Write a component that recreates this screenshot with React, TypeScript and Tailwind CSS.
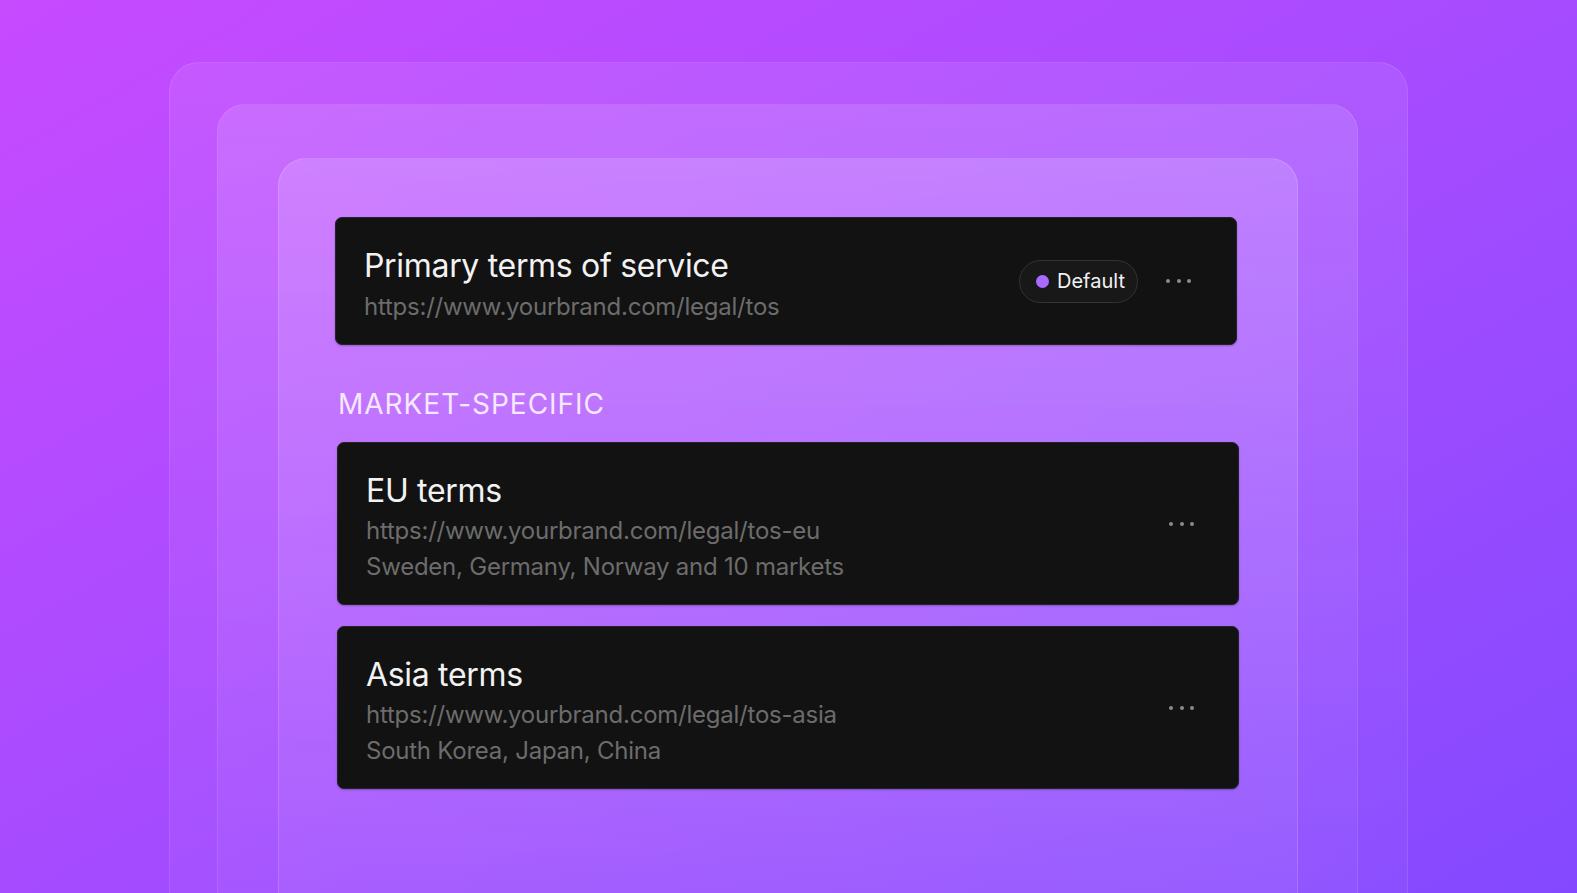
import React from "react";

interface TermsEntry {
  title: string;
  url: string;
  markets?: string;
}

const marketTerms: TermsEntry[] = [
  {
    title: "EU terms",
    url: "https://www.yourbrand.com/legal/tos-eu",
    markets: "Sweden, Germany, Norway and 10 markets",
  },
  {
    title: "Asia terms",
    url: "https://www.yourbrand.com/legal/tos-asia",
    markets: "South Korea, Japan, China",
  },
];

function MoreDots() {
  return (
    <div className="flex items-center gap-[6.5px]">
      <span className="h-[4px] w-[4px] rounded-full bg-[#8c8c8c]" />
      <span className="h-[4px] w-[4px] rounded-full bg-[#8c8c8c]" />
      <span className="h-[4px] w-[4px] rounded-full bg-[#8c8c8c]" />
    </div>
  );
}

function DefaultBadge() {
  return (
    <div className="flex h-[43px] w-[119px] items-center gap-[8px] rounded-full border border-[#333333] bg-[#181818] pl-[16px]">
      <span className="h-[13px] w-[13px] rounded-full bg-[#a96bff]" />
      <span className="text-[20px] leading-none text-[#f2f2f2]">Default</span>
    </div>
  );
}

function TermsCard({ entry }: { entry: TermsEntry }) {
  return (
    <div className="flex items-center justify-between rounded-[7px] border border-[#242424] bg-[#121212] pl-[28px] pr-[44px] shadow-[0_1px_2px_rgba(0,0,0,0.25)]">
      <div className="flex flex-col pt-[28px] pb-[19px]">
        <p className="text-[32px] leading-[40px] tracking-[-0.01em] text-[#f2f2f2]">
          {entry.title}
        </p>
        <p className="mt-[2px] text-[24px] leading-[36px] tracking-[-0.01em] text-[#6c6c6c]">
          {entry.url}
        </p>
        {entry.markets && (
          <p className="text-[24px] leading-[36px] tracking-[-0.01em] text-[#6c6c6c]">
            {entry.markets}
          </p>
        )}
      </div>
      <MoreDots />
    </div>
  );
}

export default function App() {
  return (
    <div
      className="h-[893px] w-full overflow-hidden bg-linear-to-br from-[#c74aff] via-[#a64bff] to-[#8449ff]"
      style={{ fontFamily: "Inter, 'Noto Sans', sans-serif" }}
    >
      <div className="mx-auto mt-[62px] flex h-[900px] w-[1239px] flex-col rounded-[30px] border border-white/10 bg-linear-to-b from-white/[0.08] to-white/[0.03] pl-[47px] pr-[49px] pt-[41px]">
        <div className="flex flex-1 flex-col rounded-[28px] border border-white/10 bg-linear-to-b from-white/[0.12] to-white/[0.03] pl-[60px] pr-[59px] pt-[53px]">
          <div className="flex flex-1 flex-col rounded-[28px] border border-white/15 bg-linear-to-b from-white/[0.15] to-white/[0.04] pl-[56px] pr-[60px] pt-[58px]">
            {/* primary */}
            <div className="flex items-center justify-between rounded-[7px] border border-[#242424] bg-[#121212] pl-[28px] pr-[45px] shadow-[0_1px_2px_rgba(0,0,0,0.25)]">
              <div className="flex flex-col pt-[28px] pb-[20px]">
                <p className="text-[32px] leading-[40px] tracking-[-0.01em] text-[#f2f2f2]">
                  Primary terms of service
                </p>
                <p className="mt-[4px] text-[24px] leading-[34px] tracking-[-0.01em] text-[#6c6c6c]">
                  https://www.yourbrand.com/legal/tos
                </p>
              </div>
              <div className="flex items-center gap-[28px]">
                <DefaultBadge />
                <MoreDots />
              </div>
            </div>

            <p className="mt-[41px] mb-[20px] pl-[3px] text-[28px] leading-[36px] tracking-[0.035em] text-[#f6e8ff]">
              MARKET-SPECIFIC
            </p>

            <div className="ml-[2px] mr-[-2px] flex flex-col gap-[21px]">
              {marketTerms.map((t) => (
                <TermsCard key={t.title} entry={t} />
              ))}
            </div>
          </div>
        </div>
      </div>
    </div>
  );
}
